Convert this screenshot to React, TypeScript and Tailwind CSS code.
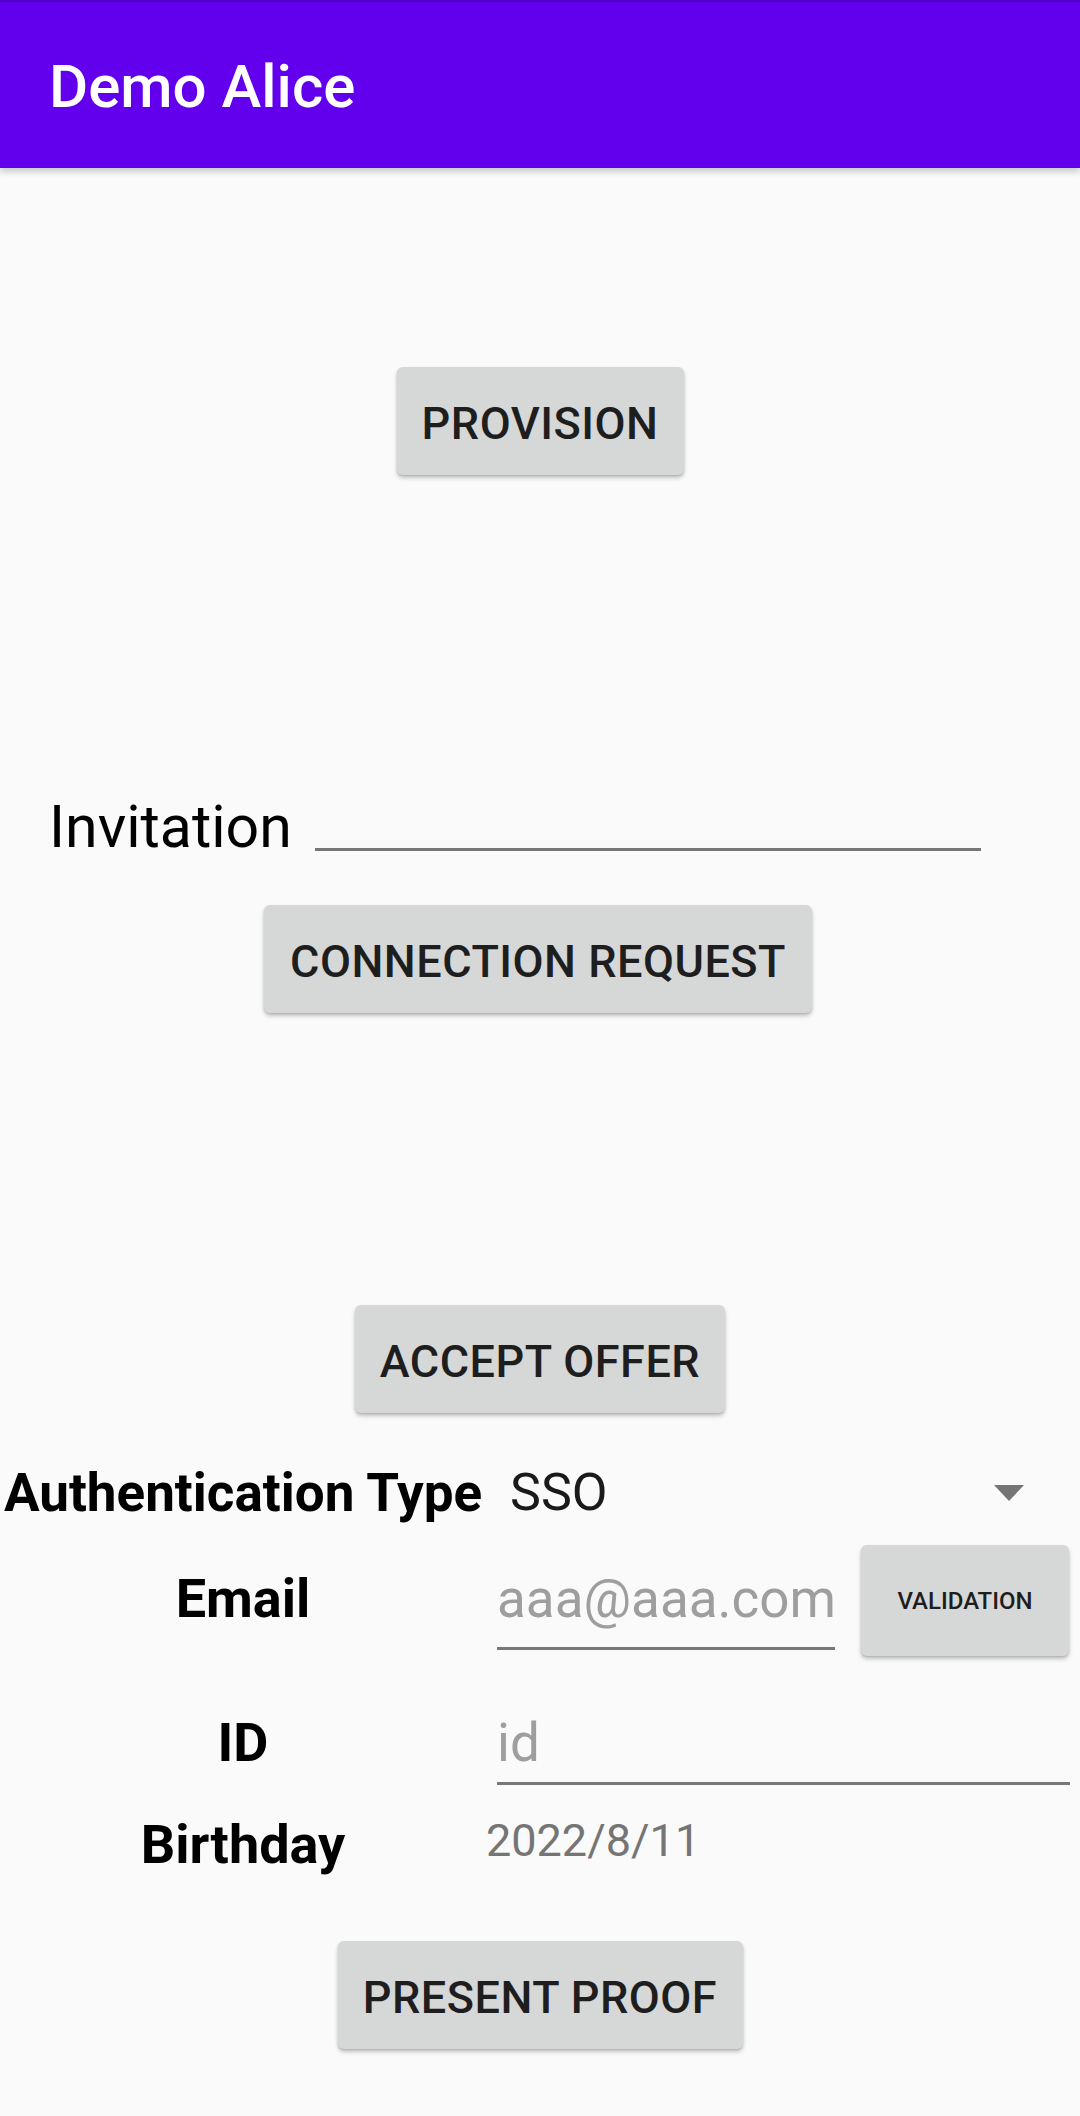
import React from 'react'

const font = { fontFamily: 'Roboto, "Noto Sans", sans-serif' }

function RaisedButton({ label, width, className = '' }: { label: string; width: string; className?: string }) {
  return (
    <button
      className={`${width} h-[108px] pt-[5px] rounded-[6px] bg-[#d6d7d7] text-[#1e1e1e] text-[45px] font-medium tracking-[0.5px] shadow-[0_3px_4px_rgba(0,0,0,0.22),0_1px_2px_rgba(0,0,0,0.12)] flex items-center justify-center ${className}`}
    >
      {label}
    </button>
  )
}

export default function App() {
  return (
    <div className="min-h-screen w-[1080px] bg-[#fafafa]" style={font}>
      {/* App bar */}
      <header className="relative z-10 h-[168px] bg-[#6200ee] border-t-[2px] border-[#4c00c4] shadow-[0_4px_6px_rgba(0,0,0,0.18)]">
        <h1 className="pl-[49px] pt-[50px] text-[60px] leading-[70px] font-medium text-white">Demo Alice</h1>
      </header>

      <div className="flex flex-col">
        <div className="mt-[199px] flex justify-center">
          <RaisedButton label="PROVISION" width="w-[287px]" />
        </div>

        {/* Invitation */}
        <div className="mt-[317px] flex items-start pl-[49px]">
          <span className="text-[59px] leading-[70px] text-black">Invitation</span>
          <div className="ml-[23px] w-[666px] h-[59px] border-b-[3px] border-[#777777]" />
        </div>

        <div className="mt-[43px] flex justify-center">
          <RaisedButton label="CONNECTION REQUEST" width="w-[548px]" className="-translate-x-[2px]" />
        </div>

        <div className="mt-[292px] flex justify-center">
          <RaisedButton label="ACCEPT OFFER" width="w-[370px]" />
        </div>

        {/* Authentication type */}
        <div className="mt-[48px] flex items-start">
          <div className="w-[486px] text-center text-[53px] leading-[64px] font-bold text-black whitespace-nowrap">Authentication Type</div>
          <div className="ml-[24px] flex-1 flex items-center justify-between pr-[56px]">
            <span className="text-[52px] leading-[64px] text-[#1a1a1a]">SSO</span>
            <svg width="30" height="16" viewBox="0 0 30 16">
              <path d="M0 0 L30 0 L15 16 Z" fill="#757575" />
            </svg>
          </div>
        </div>

        {/* Email */}
        <div className="mt-[20px] flex items-start">
          <div className="w-[486px] mt-[22px] text-center text-[54px] leading-[64px] font-bold text-black">Email</div>
          <div className="ml-[11px] mt-[22px] w-[338px] h-[83px] border-b-[3px] border-[#777777] text-[53px] leading-[64px] text-[#9e9e9e] whitespace-nowrap">
            aaa@aaa.com
          </div>
          <button className="ml-[26px] w-[208px] h-[111px] rounded-[6px] bg-[#d6d7d7] text-[#1e1e1e] text-[24px] font-medium shadow-[0_3px_4px_rgba(0,0,0,0.22),0_1px_2px_rgba(0,0,0,0.12)] flex items-center justify-center">
            VALIDATION
          </button>
        </div>

        {/* ID */}
        <div className="mt-[55px] flex items-start">
          <div className="w-[486px] text-center text-[54px] leading-[64px] font-bold text-black">ID</div>
          <div className="ml-[11px] w-[573px] h-[74px] border-b-[3px] border-[#777777] text-[53px] leading-[64px] text-[#9e9e9e]">
            id
          </div>
        </div>

        {/* Birthday */}
        <div className="mt-[28px] flex items-start">
          <div className="w-[486px] text-center text-[54px] leading-[64px] font-bold text-black">Birthday</div>
          <div className="mt-[2px] text-[45px] leading-[52px] text-[#757575]">2022/8/11</div>
        </div>

        <div className="mt-[64px] flex justify-center">
          <RaisedButton label="PRESENT PROOF" width="w-[405px]" />
        </div>
      </div>
    </div>
  )
}
